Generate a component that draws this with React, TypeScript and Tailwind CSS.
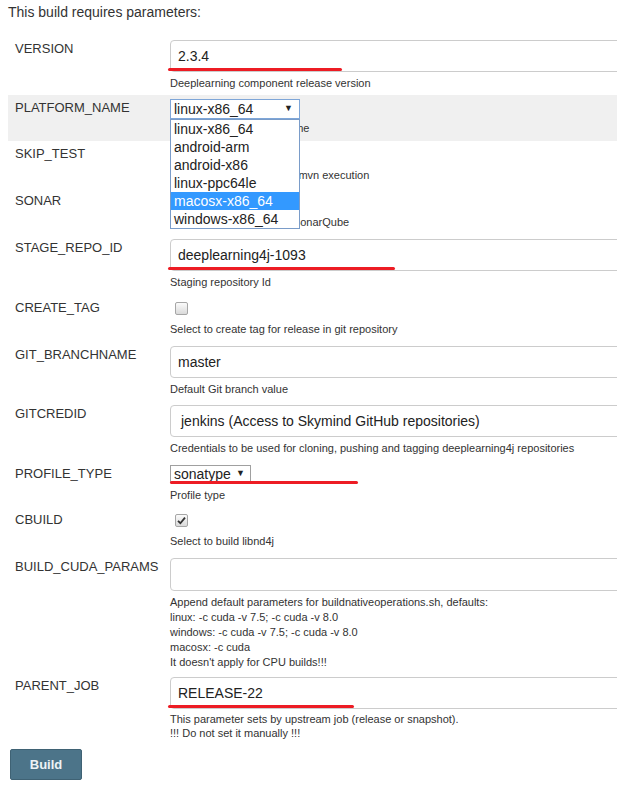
import type { ReactNode } from 'react'

const platforms = ['linux-x86_64', 'android-arm', 'android-x86', 'linux-ppc64le', 'macosx-x86_64', 'windows-x86_64']

const Row = ({ label, grey = false, children }: { label: string; grey?: boolean; children: ReactNode }) => (
    <div className={grey ? 'flex pl-[7px] bg-[#f0f0f0]' : 'flex pl-[7px]'}>
        <div className="w-[155px] shrink-0 pt-[4px] text-[13px] leading-[18px] text-[#333]">{label}</div>
        <div className="flex-1 min-w-0 pt-[4px]">{children}</div>
    </div>
)

const Desc = ({ children, className = '' }: { children: ReactNode; className?: string }) => (
    <div className={`text-[11px] leading-[14px] text-[#333] ${className}`}>{children}</div>
)

const TextBox = ({ value, mark }: { value: string; mark?: string }) => (
    <div className="relative">
        <div className="h-[32px] w-[calc(100%+6px)] border border-[#ccc] rounded-[4px] bg-white pl-[7px] flex items-center text-[14px] text-[#222]">
            {value}
        </div>
        {mark && <span className={`absolute top-[28px] left-[-2px] h-[3px] rounded-full bg-[#ed1c24] ${mark}`} />}
    </div>
)

const Check = ({ checked = false }: { checked?: boolean }) => (
    <div className="h-[18px] pt-[3px] pl-[5px]">
        <div className="w-[13px] h-[13px] rounded-[2px] border border-[#a6a6a6] bg-gradient-to-b from-[#fbfbfb] to-[#dadada] flex items-center justify-center">
            {checked && (
                <svg width="9" height="9" viewBox="0 0 9 9">
                    <path d="M1 4.8 L3.4 7.2 L8 1.6" fill="none" stroke="#333" strokeWidth="1.8" />
                </svg>
            )}
        </div>
    </div>
)

export default function App() {
    return (
        <div className="w-full min-h-[800px] overflow-hidden bg-white font-['Liberation_Sans',Arial,sans-serif]">
            <div className="pl-[8px]">
                <div className="pt-[2px] h-[22px] text-[14px] leading-[20px] text-[#333] mb-[14px]">This build requires parameters:</div>

                <Row label="VERSION">
                    <TextBox value="2.3.4" mark="w-[174px]" />
                    <Desc className="mt-[4px] pb-[5px]">Deeplearning component release version</Desc>
                </Row>

                <Row label="PLATFORM_NAME" grey>
                    <div className="relative w-[130px] z-10">
                        <div className="h-[20px] border border-[#7ea6d8] bg-white flex items-center justify-between pl-[3px] pr-[6px] text-[14px] text-[#222]">
                            <span>linux-x86_64</span>
                            <span className="text-[9px]">▼</span>
                        </div>
                        <div className="absolute top-full left-0 w-[130px] border border-[#7a9cc9] bg-white">
                            {platforms.map((p) => (
                                <div
                                    key={p}
                                    className={p === 'macosx-x86_64'
                                        ? 'h-[18px] leading-[18px] pl-[3px] text-[14px] bg-[#3399ff] text-white'
                                        : 'h-[18px] leading-[18px] pl-[3px] text-[14px] text-[#222]'}
                                >
                                    {p}
                                </div>
                            ))}
                        </div>
                    </div>
                    <Desc className="mt-[2px] pb-[6px]">Select a build platform name</Desc>
                </Row>

                <Row label="SKIP_TEST">
                    <Check />
                    <Desc className="mt-[5px] pb-[6px]">Select to skip tests during mvn execution</Desc>
                </Row>

                <Row label="SONAR">
                    <Check />
                    <Desc className="mt-[5px] pb-[6px]">Select to run analysis on SonarQube</Desc>
                </Row>

                <Row label="STAGE_REPO_ID">
                    <TextBox value="deeplearning4j-1093" mark="w-[227px]" />
                    <Desc className="mt-[4px] pb-[6px]">Staging repository Id</Desc>
                </Row>

                <Row label="CREATE_TAG">
                    <Check />
                    <Desc className="mt-[5px] pb-[6px]">Select to create tag for release in git repository</Desc>
                </Row>

                <Row label="GIT_BRANCHNAME">
                    <TextBox value="master" />
                    <Desc className="mt-[4px] pb-[5px]">Default Git branch value</Desc>
                </Row>

                <Row label="GITCREDID">
                    <div className="h-[32px] w-[calc(100%+6px)] border border-[#ccc] rounded-[4px] bg-white pl-[10px] flex items-center text-[14px] text-[#222]">
                        jenkins (Access to Skymind GitHub repositories)
                    </div>
                    <Desc className="mt-[4px] pb-[6px]">Credentials to be used for cloning, pushing and tagging deeplearning4j repositories</Desc>
                </Row>

                <Row label="PROFILE_TYPE">
                    <div className="relative">
                        <div className="h-[18px] w-[81px] border border-[#a0a0a0] bg-white flex items-center justify-between pl-[3px] pr-[5px] text-[14px] text-[#222]">
                            <span>sonatype</span>
                            <span className="text-[9px]">▼</span>
                        </div>
                        <span className="absolute top-[16px] left-[0px] w-[188px] h-[3px] rounded-full bg-[#ed1c24]" />
                    </div>
                    <Desc className="mt-[5px] pb-[5px]">Profile type</Desc>
                </Row>

                <Row label="CBUILD">
                    <Check checked />
                    <Desc className="mt-[5px] pb-[6px]">Select to build libnd4j</Desc>
                </Row>

                <Row label="BUILD_CUDA_PARAMS">
                    <div className="h-[33px] w-[calc(100%+6px)] border border-[#ccc] rounded-[4px] bg-white" />
                    <div className="mt-[4px] pb-[3px] text-[11px] leading-[15px] text-[#333]">
                        <div>Append default parameters for buildnativeoperations.sh, defaults:</div>
                        <div>linux: -c cuda -v 7.5; -c cuda -v 8.0</div>
                        <div>windows: -c cuda -v 7.5; -c cuda -v 8.0</div>
                        <div>macosx: -c cuda</div>
                        <div>It doesn't apply for CPU builds!!!</div>
                    </div>
                </Row>

                <Row label="PARENT_JOB">
                    <TextBox value="RELEASE-22" mark="w-[186px]" />
                    <Desc className="mt-[3px]">
                        <div>This parameter sets by upstream job (release or snapshot).</div>
                        <div>!!! Do not set it manually !!!</div>
                    </Desc>
                </Row>

                <div className="pt-[9px] pl-[2px]">
                    <button className="w-[72px] h-[31px] rounded-[2px] border border-[#3f6274] bg-[#4c7489] text-[13px] font-bold text-[#eef3f6]">
                        Build
                    </button>
                </div>
            </div>
        </div>
    )
}
